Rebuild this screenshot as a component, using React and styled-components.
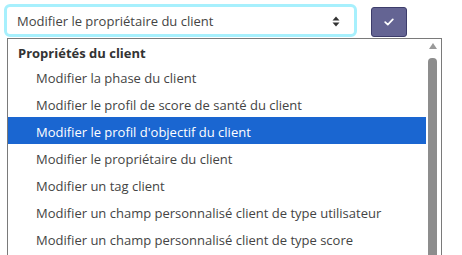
import React from "react";
import styled, { createGlobalStyle } from "styled-components";

const Global = createGlobalStyle`
  html, body { margin: 0; padding: 0; background: #fff; }
  body { font-family: "Open Sans", "Noto Sans", sans-serif; width: 462px; height: 255px; overflow: hidden; }
`;

const Page = styled.div`
  position: relative;
  padding: 4px 0 0 4px;
  height: 255px;
  box-sizing: border-box;
  overflow: hidden;
`;

const Toolbar = styled.div`
  display: flex;
  align-items: flex-end;
  gap: 14px;
`;

const SelectBox = styled.div`
  box-sizing: border-box;
  width: 353px;
  height: 33px;
  border: 3px solid #a7f0fd;
  border-radius: 6px;
  display: flex;
  align-items: center;
  justify-content: space-between;
  padding: 1px 14px 0 10px;
  font-size: 13px;
  color: #444;
  background: #fff;
`;

const ConfirmButton = styled.button`
  box-sizing: border-box;
  width: 36px;
  height: 30px;
  border: 1px solid #3d3d6b;
  border-radius: 3px;
  background: #646493;
  display: flex;
  align-items: center;
  justify-content: center;
  padding: 0;
`;

const Dropdown = styled.div`
  position: absolute;
  left: 7px;
  top: 38px;
  width: 435px;
  height: 230px;
  box-sizing: border-box;
  border: 1px solid #7a7a7a;
  background: #fff;
  display: flex;
  overflow: hidden;
`;

const List = styled.div`
  flex: 1;
  display: flex;
  flex-direction: column;
`;

const GroupLabel = styled.div`
  height: 24px;
  flex: 0 0 24px;
  box-sizing: border-box;
  padding: 0 0 1px 10px;
  display: flex;
  align-items: flex-end;
  font-weight: 700;
  font-size: 13px;
  color: #333;
  line-height: 18px;
`;

const Option = styled.div`
  height: 27px;
  flex: 0 0 27px;
  padding: 3px 0 0 28px;
  display: flex;
  align-items: center;
  font-size: 13px;
  box-sizing: border-box;
  color: ${(p) => (p.$active ? "#fff" : "#444")};
  background: ${(p) => (p.$active ? "#1a66d1" : "transparent")};
`;

const Scrollbar = styled.div`
  width: 15px;
  flex: 0 0 15px;
  position: relative;
`;

const ArrowUp = styled.div`
  position: absolute;
  left: 3px;
  top: 4px;
  width: 0;
  height: 0;
  border-left: 4px solid transparent;
  border-right: 4px solid transparent;
  border-bottom: 6px solid #9a9a9a;
`;

const Thumb = styled.div`
  position: absolute;
  left: 2px;
  top: 19px;
  width: 9px;
  height: 240px;
  border-radius: 4px 4px 0 0;
  background: #8d8d8d;
`;

const options = [
  "Modifier la phase du client",
  "Modifier le profil de score de santé du client",
  "Modifier le profil d'objectif du client",
  "Modifier le propriétaire du client",
  "Modifier un tag client",
  "Modifier un champ personnalisé client de type utilisateur",
  "Modifier un champ personnalisé client de type score",
];

export default function App() {
  return (
    <>
      <Global />
      <Page>
        <Toolbar>
          <SelectBox>
            <span>Modifier le propriétaire du client</span>
            <svg width="8" height="11" viewBox="0 0 8 11">
              <path d="M4 0.5 L7.5 4.5 L0.5 4.5 Z" fill="#333" />
              <path d="M4 10.5 L7.5 6.5 L0.5 6.5 Z" fill="#333" />
            </svg>
          </SelectBox>
          <ConfirmButton aria-label="Valider">
            <svg width="10" height="8" viewBox="0 0 10 8">
              <path d="M1.2 4.2 L3.8 6.6 L8.8 1.4" stroke="#fff" strokeWidth="1.7" fill="none" strokeLinecap="round" strokeLinejoin="round" />
            </svg>
          </ConfirmButton>
        </Toolbar>
        <Dropdown>
          <List>
            <GroupLabel>Propriétés du client</GroupLabel>
            {options.map((o, i) => (
              <Option key={o} $active={i === 2}>{o}</Option>
            ))}
          </List>
          <Scrollbar>
            <ArrowUp />
            <Thumb />
          </Scrollbar>
        </Dropdown>
      </Page>
    </>
  );
}
